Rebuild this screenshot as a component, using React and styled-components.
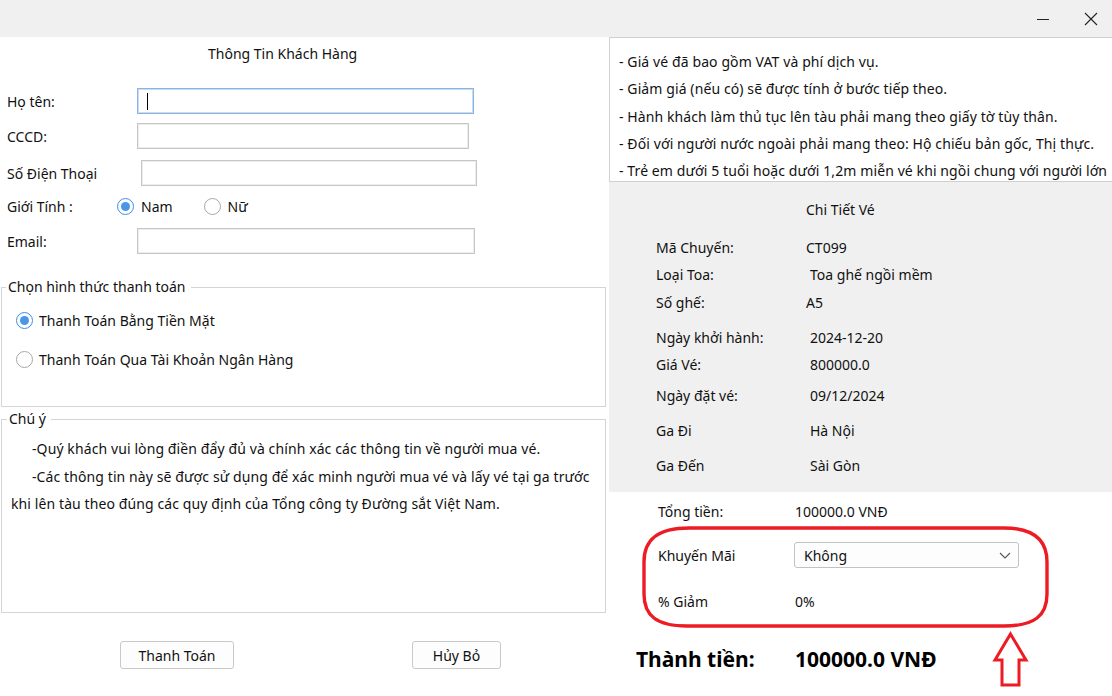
import React from 'react'
import styled, { createGlobalStyle } from 'styled-components'

const Global = createGlobalStyle`
    html, body {
        margin: 0;
        padding: 0;
        background: #f0f0f0;
    }
    body {
        font-family: "Noto Sans", "Open Sans", sans-serif;
        font-size: 14px;
        color: #111;
    }
`

const Window = styled.div`
    width: 1112px;
    height: 696px;
    display: flex;
    flex-direction: column;
    background: #f0f0f0;
    overflow: hidden;
`

const TitleBar = styled.div`
    height: 37px;
    flex: none;
    display: flex;
    justify-content: flex-end;
    align-items: center;
    padding-right: 14px;
    gap: 34px;
    box-sizing: border-box;
`

const Body = styled.div`
    flex: 1;
    display: flex;
    min-height: 0;
`

const Left = styled.div`
    width: 609px;
    flex: none;
    background: #fff;
    display: flex;
    flex-direction: column;
`

const Heading = styled.div`
    height: 34px;
    line-height: 34px;
    padding-left: 208px;
`

const Row = styled.div`
    display: flex;
    align-items: center;
    height: 26px;
    margin-top: ${p => p.$top}px;
    padding-left: 7px;
`

const Label = styled.div`
    width: ${p => p.$w}px;
    flex: none;
    white-space: nowrap;
`

const Input = styled.div`
    width: ${p => p.$w}px;
    height: 26px;
    box-sizing: border-box;
    border: 1px solid ${p => (p.$focus ? '#8cb4e2' : '#c6c6c6')};
    box-shadow: inset 0 0 0 1px ${p => (p.$focus ? '#c9dcf2' : '#ededed')};
    background: #fff;
    display: flex;
    align-items: center;
    padding-left: 9px;
`

const Caret = styled.span`
    width: 1px;
    height: 17px;
    background: #000;
`

const RadioGroup = styled.div`
    display: flex;
    align-items: center;
    gap: ${p => p.$gap || 30}px;
`

const RadioItem = styled.label`
    display: flex;
    align-items: center;
    gap: 7px;
    white-space: nowrap;
`

const Dot = styled.span`
    width: 17px;
    height: 17px;
    flex: none;
    box-sizing: border-box;
    border-radius: 50%;
    border: 1px solid ${p => (p.$on ? '#3d8ee6' : '#a8a8a8')};
    display: flex;
    align-items: center;
    justify-content: center;
    background: #fff;
    &::after {
        content: '';
        width: 9px;
        height: 9px;
        border-radius: 50%;
        background: ${p => (p.$on ? '#4a96e8' : 'transparent')};
    }
`

const Group = styled.fieldset`
    margin: ${p => p.$top}px 3px 0 1px;
    border: 1px solid #d5d5d5;
    padding: ${p => p.$pad};
    min-width: 0;
    legend {
        padding: 0 5px 0 2px;
        margin-left: -4px;
        line-height: 18px;
    }
`

const PayList = styled.div`
    display: flex;
    flex-direction: column;
    gap: 19px;
    padding-left: 6px;
    ${RadioItem} {
        height: 20px;
        gap: 6px;
    }
`

const NoteBody = styled.div`
    height: 184px;
    box-sizing: border-box;
    padding-top: 7px;
    letter-spacing: 0.1px;
    p {
        margin: 0;
        line-height: 27.5px;
        white-space: nowrap;
    }
    p.ind {
        text-indent: 21px;
    }
`

const Buttons = styled.div`
    display: flex;
    margin-top: 28px;
    padding-left: 120px;
    gap: 178px;
`

const Button = styled.button`
    height: 28px;
    width: ${p => p.$w}px;
    box-sizing: border-box;
    border: 1px solid #c9c9c9;
    border-radius: 3px;
    background: #fdfdfd;
    font: inherit;
    color: #111;
    padding: 0;
`

const Right = styled.div`
    flex: 1;
    display: flex;
    flex-direction: column;
`

const Notes = styled.div`
    height: 145px;
    flex: none;
    box-sizing: border-box;
    background: #fff;
    border: 1px solid #d0d0d0;
    border-right: none;
    padding: 10px 0 0 9px;
    font-size: 14px;
    letter-spacing: 0.1px;
    overflow: hidden;
    p {
        margin: 0;
        line-height: 27.3px;
        white-space: nowrap;
    }
`

const Details = styled.div`
    height: 310px;
    flex: none;
    padding: 18px 0 0 47px;
    box-sizing: border-box;
`

const DRow = styled.div`
    display: flex;
    height: 20px;
    line-height: 20px;
    margin-top: ${p => p.$top || 0}px;
`

const DLabel = styled.div`
    width: ${p => p.$w || 150}px;
    flex: none;
    white-space: nowrap;
`

const DValue = styled.div`
    padding-left: ${p => p.$off || 0}px;
    white-space: nowrap;
`

const Summary = styled.div`
    flex: 1;
    background: #fff;
    position: relative;
    padding: 9px 0 0 49px;
    box-sizing: border-box;
`

const SRow = styled.div`
    display: flex;
    align-items: center;
    height: ${p => p.$h || 20}px;
    margin-top: ${p => p.$top || 0}px;
`

const Select = styled.div`
    width: 225px;
    height: 26px;
    box-sizing: border-box;
    border: 1px solid #c2c2c2;
    border-radius: 3px;
    background: #fdfdfd;
    display: flex;
    align-items: center;
    justify-content: space-between;
    padding: 0 6px 0 9px;
    margin-left: -1px;
`

const Total = styled.div`
    display: flex;
    align-items: center;
    margin: 33px 0 0 -22px;
    height: 30px;
    font-size: 21px;
    font-weight: 700;
    color: #000;
`

const Overlay = styled.svg`
    position: absolute;
    left: 0;
    top: 0;
    width: 503px;
    height: 205px;
    pointer-events: none;
`

const ticket = [
    { k: 'Mã Chuyến:', v: 'CT099', top: 18, off: 0 },
    { k: 'Loại Toa:', v: 'Toa ghế ngồi mềm', top: 7, off: 4 },
    { k: 'Số ghế:', v: 'A5', top: 8, off: 0 },
    { k: 'Ngày khởi hành:', v: '2024-12-20', top: 15, off: 4 },
    { k: 'Giá Vé:', v: '800000.0', top: 7, off: 4 },
    { k: 'Ngày đặt vé:', v: '09/12/2024', top: 11, off: 4 },
    { k: 'Ga Đi', v: 'Hà Nội', top: 15, off: 4 },
    { k: 'Ga Đến', v: 'Sài Gòn', top: 15, off: 4 },
]

const notes = [
    '- Giá vé đã bao gồm VAT và phí dịch vụ.',
    '- Giảm giá (nếu có) sẽ được tính ở bước tiếp theo.',
    '- Hành khách làm thủ tục lên tàu phải mang theo giấy tờ tùy thân.',
    '- Đối với người nước ngoài phải mang theo: Hộ chiếu bản gốc, Thị thực.',
    '- Trẻ em dưới 5 tuổi hoặc dưới 1,2m miễn vé khi ngồi chung với người lớn',
]

function Radio({ on, children }) {
    return (
        <RadioItem>
            <Dot $on={on} />
            {children}
        </RadioItem>
    )
}

export default function App() {
    return (
        <Window>
            <Global />
            <TitleBar>
                <svg width="14" height="14" viewBox="0 0 14 14">
                    <path d="M1 7.5h12" stroke="#222" strokeWidth="1" />
                </svg>
                <svg width="14" height="14" viewBox="0 0 14 14">
                    <path d="M1 1l12 12M13 1L1 13" stroke="#222" strokeWidth="1.1" />
                </svg>
            </TitleBar>
            <Body>
                <Left>
                    <Heading>Thông Tin Khách Hàng</Heading>
                    <Row $top={17}>
                        <Label $w={130}>Họ tên:</Label>
                        <Input $w={337} $focus><Caret /></Input>
                    </Row>
                    <Row $top={9}>
                        <Label $w={130}>CCCD:</Label>
                        <Input $w={332} />
                    </Row>
                    <Row $top={11}>
                        <Label $w={134}>Số Điện Thoại</Label>
                        <Input $w={336} />
                    </Row>
                    <Row $top={7}>
                        <Label $w={110}>Giới Tính :</Label>
                        <RadioGroup $gap={31}>
                            <Radio on>Nam</Radio>
                            <Radio>Nữ</Radio>
                        </RadioGroup>
                    </Row>
                    <Row $top={9}>
                        <Label $w={130}>Email:</Label>
                        <Input $w={338} />
                    </Row>

                    <Group $top={24} $pad="14px 0 37px 8px">
                        <legend>Chọn hình thức thanh toán</legend>
                        <PayList>
                            <Radio on>Thanh Toán Bằng Tiền Mặt</Radio>
                            <Radio>Thanh Toán Qua Tài Khoản Ngân Hàng</Radio>
                        </PayList>
                    </Group>

                    <Group $top={3} $pad="0 0 0 9px">
                        <legend>Chú ý</legend>
                        <NoteBody>
                            <p className="ind">-Quý khách vui lòng điền đẩy đủ và chính xác các thông tin về người mua vé.</p>
                            <p className="ind">-Các thông tin này sẽ được sử dụng để xác minh người mua vé và lấy vé tại ga trước</p>
                            <p>khi lên tàu theo đúng các quy định của Tổng công ty Đường sắt Việt Nam.</p>
                        </NoteBody>
                    </Group>

                    <Buttons>
                        <Button $w={114}>Thanh Toán</Button>
                        <Button $w={89}>Hủy Bỏ</Button>
                    </Buttons>
                </Left>

                <Right>
                    <Notes>
                        {notes.map(n => <p key={n}>{n}</p>)}
                    </Notes>
                    <Details>
                        <DRow>
                            <DLabel />
                            <DValue>Chi Tiết Vé</DValue>
                        </DRow>
                        {ticket.map(t => (
                            <DRow key={t.k} $top={t.top}>
                                <DLabel>{t.k}</DLabel>
                                <DValue $off={t.off}>{t.v}</DValue>
                            </DRow>
                        ))}
                    </Details>
                    <Summary>
                        <SRow>
                            <DLabel $w={137}>Tổng tiền:</DLabel>
                            <DValue>100000.0 VNĐ</DValue>
                        </SRow>
                        <SRow $h={26} $top={21}>
                            <DLabel $w={137}>Khuyến Mãi</DLabel>
                            <Select>
                                <span>Không</span>
                                <svg width="14" height="14" viewBox="0 0 14 14">
                                    <path d="M2 5l5 5 5-5" fill="none" stroke="#555" strokeWidth="1.1" />
                                </svg>
                            </Select>
                        </SRow>
                        <SRow $top={23}>
                            <DLabel $w={137}>% Giảm</DLabel>
                            <DValue>0%</DValue>
                        </SRow>
                        <Total>
                            <DLabel $w={159}>Thành tiền:</DLabel>
                            <DValue>100000.0 VNĐ</DValue>
                        </Total>
                        <Overlay viewBox="0 0 503 205">
                            <path
                                d="M80 36 H395 C425 36 438 48 438 70 V102 C438 124 425 134 395 134 H78 C48 134 35 124 35 102 V70 C35 48 48 36 80 36 Z"
                                fill="none"
                                stroke="#ed1c24"
                                strokeWidth="3.4"
                            />
                            <path
                                d="M401.5 142 L417 168 H410 V193 H393 V168 H386 Z"
                                fill="none"
                                stroke="#ed1c24"
                                strokeWidth="3"
                                strokeLinejoin="miter"
                            />
                        </Overlay>
                    </Summary>
                </Right>
            </Body>
        </Window>
    )
}
